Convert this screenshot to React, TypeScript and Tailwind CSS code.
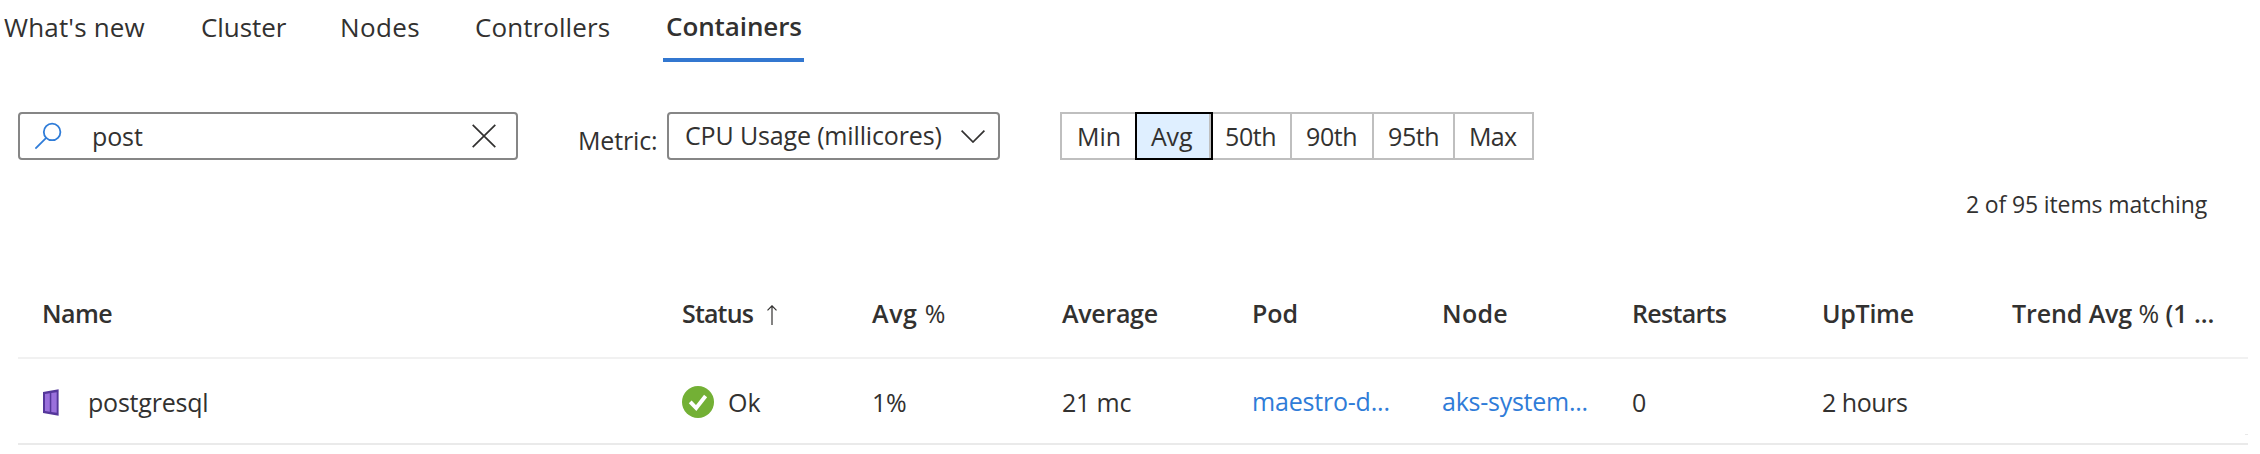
import type { ReactNode } from "react";

const tabs = [
  { label: "What's new", style: "w-[197px] tracking-[0.16px]" },
  { label: "Cluster", style: "w-[139px] tracking-[-0.07px]" },
  { label: "Nodes", style: "w-[135px] tracking-[0.4px]" },
  { label: "Controllers", style: "w-[188px] tracking-[0.08px]" },
];

const metrics = [
  { label: "Min", style: "w-[75px] pl-[15px] border-2 border-r-0 border-[#bfbfbf]" },
  { label: "Avg", style: "w-[78px] pl-[14px] border-2 border-black bg-[#dfefff] tracking-[-0.2px] shadow-[inset_-2px_0_0_#bfbfbf]" },
  { label: "50th", style: "w-[77px] pl-[12px] border-y-2 border-[#bfbfbf] tracking-[-0.4px]" },
  { label: "90th", style: "w-[82px] pl-[14px] border-y-2 border-l-2 border-[#bfbfbf] tracking-[-0.4px]" },
  { label: "95th", style: "w-[81px] pl-[14px] border-y-2 border-l-2 border-[#bfbfbf] tracking-[-0.4px]" },
  { label: "Max", style: "w-[81px] pl-[14px] border-2 border-[#bfbfbf] tracking-[-0.7px]" },
];

function SearchIcon() {
  return (
    <svg className="h-7 w-7 shrink-0" viewBox="0 0 28 28" fill="none" stroke="#2f7cd8" strokeWidth="1.8">
      <circle cx="17.1" cy="9.9" r="8.3" />
      <path d="M11.2 15.8L0.4 26.6" />
    </svg>
  );
}

function CloseIcon() {
  return (
    <svg className="h-6 w-6 shrink-0" viewBox="0 0 24 24" fill="none" stroke="#323130" strokeWidth="1.7">
      <path d="M0.7 0.9L23.3 23.1M23.3 0.9L0.7 23.1" />
    </svg>
  );
}

function ChevronIcon() {
  return (
    <svg className="h-[14px] w-6 shrink-0" viewBox="0 0 24 14" fill="none" stroke="#323130" strokeWidth="1.7">
      <path d="M0.6 1.7L12 13L23.4 1.7" />
    </svg>
  );
}

function ArrowUpIcon() {
  return (
    <svg className="h-5 w-[10px] shrink-0" viewBox="0 0 10 20" fill="none" stroke="#323130" strokeWidth="1.2">
      <path d="M5 20V1M0.5 5.3L5 0.8L9.5 5.3" />
    </svg>
  );
}

function ContainerIcon() {
  return (
    <svg className="h-[27px] w-4 shrink-0" viewBox="0 0 16 27">
      <path d="M0 3L15.6 0.3V26.7L0 24Z" fill="#55379b" />
      <path d="M2 4.9L6.8 4.2V22.8L2 22.1Z" fill="#9a70dc" />
      <path d="M8.3 4L13.7 3.2V23.8L8.3 23Z" fill="#9a70dc" />
    </svg>
  );
}

function OkIcon() {
  return (
    <svg className="h-8 w-8 shrink-0" viewBox="0 0 32 32">
      <circle cx="16" cy="16" r="16" fill="#73b035" />
      <path d="M8.2 15.8L14.2 22L23.6 10" fill="none" stroke="#fff" strokeWidth="3.9" />
    </svg>
  );
}

function Cell({ className, children }: { className: string; children?: ReactNode }) {
  return <div className={"flex shrink-0 items-center whitespace-pre " + className}>{children}</div>;
}

export default function App() {
  return (
    <div className="h-[454px] w-[2260px] overflow-hidden bg-white font-['Open_Sans',sans-serif] text-[25px] leading-[34px] text-[#323130]">
      <nav className="flex h-[62px] pl-1 text-[26px]">
        {tabs.map((t) => (
          <div key={t.label} className={"flex h-[54px] items-center whitespace-nowrap " + t.style}>
            {t.label}
          </div>
        ))}
        <div className="flex h-[62px] w-[141px] items-center border-b-4 border-[#3277d0] pb-[7px] pl-[3px] font-semibold tracking-[-0.1px]">
          Containers
        </div>
      </nav>

      <div className="mt-[50px] flex h-12 pl-[18px]">
        <div className="flex w-[500px] items-center rounded-[4px] border-2 border-[#868686] pl-[15px] pr-5">
          <SearchIcon />
          <span className="ml-[29px] flex-1 tracking-[-0.12px]">post</span>
          <CloseIcon />
        </div>
        <span className="ml-[60px] w-[89px] pt-[11px] tracking-[-0.15px]">Metric:</span>
        <div className="flex w-[333px] items-center rounded-[4px] border-2 border-[#868686] pl-[16px] pr-[13px]">
          <span className="flex-1 whitespace-nowrap pb-[2px] tracking-[-0.15px]">CPU Usage (millicores)</span>
          <ChevronIcon />
        </div>
        <div className="ml-[60px] flex">
          {metrics.map((m) => (
            <div key={m.label} className={"flex items-center " + m.style}>
              {m.label}
            </div>
          ))}
        </div>
      </div>

      <div className="mt-[27px] flex justify-end pr-[53px] text-[23px] tracking-[-0.13px]">2 of 95 items matching</div>

      <div className="ml-[18px] mt-[49px] w-[2230px]">
        <div className="flex h-[89px] border-b-2 border-[#f1f1f1] pb-[1px] font-semibold">
          <Cell className="w-[664px] pl-6 tracking-[-0.6px]">Name</Cell>
          <Cell className="w-[190px] tracking-[-0.84px]">
            Status
            <span className="ml-[14px] flex pt-[4px]">
              <ArrowUpIcon />
            </span>
          </Cell>
          <Cell className="w-[190px] tracking-[0.6px]">
            Avg <span className="font-medium">%</span>
          </Cell>
          <Cell className="w-[190px] tracking-[-0.3px]">Average</Cell>
          <Cell className="w-[190px] tracking-[-0.1px]">Pod</Cell>
          <Cell className="w-[190px] tracking-[0.3px]">Node</Cell>
          <Cell className="w-[190px] tracking-[-0.7px]">Restarts</Cell>
          <Cell className="w-[190px] tracking-[-0.28px]">UpTime</Cell>
          <Cell className="w-[220px] tracking-[-0.1px]">
            Trend Avg <span className="font-medium">%</span> (1 ...
          </Cell>
        </div>
        <div className="flex h-[86px] border-b-2 border-[#eaeaea] pt-[2px]">
          <Cell className="w-[664px] pl-[25px] tracking-[-0.22px]">
            <ContainerIcon />
            <span className="ml-[29px]">postgresql</span>
          </Cell>
          <Cell className="w-[190px]">
            <OkIcon />
            <span className="ml-[14px]">Ok</span>
          </Cell>
          <Cell className="w-[190px] tracking-[-0.19px]">1%</Cell>
          <Cell className="w-[190px] tracking-[-0.18px]">21 mc</Cell>
          <Cell className="w-[190px] pb-[2px] tracking-[-0.2px] text-[#2f7cd8]">maestro-d...</Cell>
          <Cell className="w-[190px] pb-[2px] tracking-[-0.25px] text-[#2f7cd8]">aks-system...</Cell>
          <Cell className="w-[190px]">0</Cell>
          <Cell className="w-[190px] tracking-[-0.47px]">2 hours</Cell>
          <Cell className="w-[236px] items-end! justify-end pb-[8px]">
            <span className="h-px w-[3px] bg-[#e8e8e8]" />
          </Cell>
        </div>
      </div>
    </div>
  );
}
